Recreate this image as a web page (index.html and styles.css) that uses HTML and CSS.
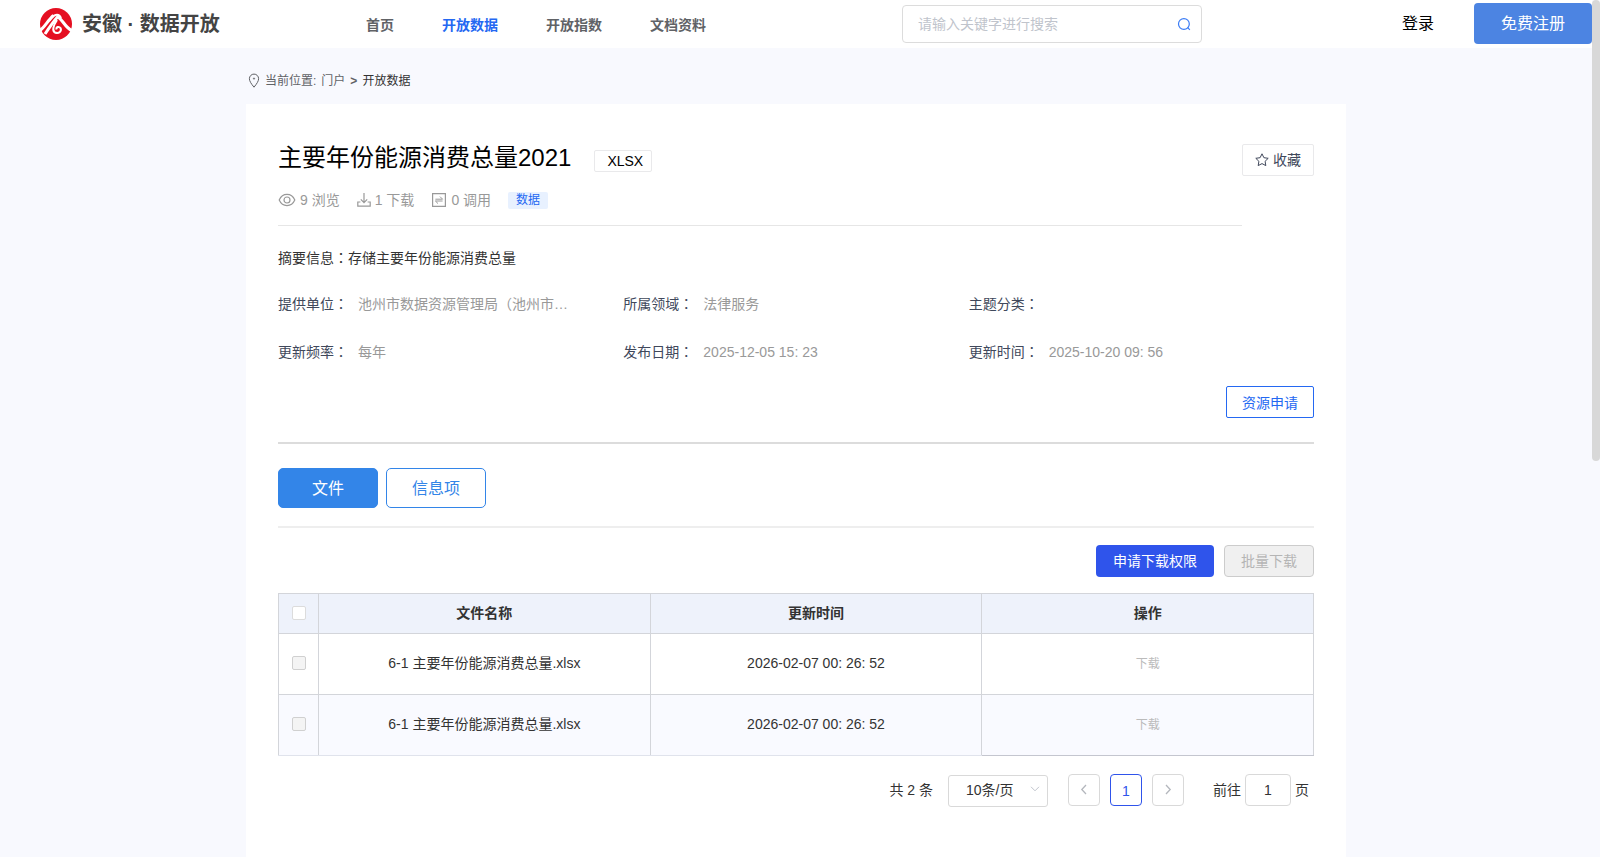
FILE: index.html
```html
<!DOCTYPE html>
<html lang="zh-CN">
<head>
  <meta charset="UTF-8">
  <meta name="viewport" content="width=device-width, initial-scale=1.0">
  <title>安徽 · 数据开放</title>
  <link rel="stylesheet" href="styles.css">
</head>
<body>
  <header class="header">
    <a class="logo" href="#">
      <svg width="32" height="32" viewBox="0 0 32 32">
        <circle cx="16" cy="16" r="16" fill="#e50f21"/>
        <path d="M0 22.5 C5 19 8 12 13.5 7.5 M5 26 C9 20 13 14 17.5 9 C22 10 25 20 32 22.5" fill="none" stroke="#fff" stroke-width="3"/>
        <path d="M9 13 C13 6 19 5 21 10" fill="none" stroke="#fff" stroke-width="2"/>
        <path d="M17 12 C13 18 12 23 15 24.5 C19 26 22 23 20.5 20 C19 18 16 19 16.5 21.5" fill="none" stroke="#fff" stroke-width="2"/>
      </svg>
      <span>安徽 · 数据开放</span>
    </a>
    <nav class="nav">
      <a href="#">首页</a>
      <a href="#" class="active">开放数据</a>
      <a href="#">开放指数</a>
      <a href="#">文档资料</a>
    </nav>
    <form class="search">
      <input type="text" placeholder="请输入关键字进行搜索" aria-label="搜索">
      <button type="button" aria-label="搜索">
        <svg width="14" height="14" viewBox="0 0 14 14" fill="none" stroke="#3b7cf5" stroke-width="1.2"><circle cx="6.9" cy="7" r="5.4"/><path d="M10.6 10.4 L12.8 12.8"/></svg>
      </button>
    </form>
    <a class="login" href="#">登录</a>
    <button class="register" type="button">免费注册</button>
  </header>

  <main class="container">
    <div class="breadcrumb">
      <svg width="12" height="16" viewBox="0 0 12 16" fill="none" stroke="#606266"><path d="M6 14.2 C3 10.5 1.4 8 1.4 5.7 A4.6 4.6 0 0 1 10.6 5.7 C10.6 8 9 10.5 6 14.2 Z"/><circle cx="6" cy="5.6" r=".6"/></svg>
      <span>当前位置:</span>
      <a href="#">门户</a>
      <b>&gt;</b>
      <span class="current">开放数据</span>
    </div>

    <section class="card">
      <div class="top">
        <div class="summary">
          <div class="title">
            <h1>主要年份能源消费总量2021</h1>
            <span class="format">XLSX</span>
          </div>
          <div class="stats">
            <span class="stat">
              <svg width="18" height="16" viewBox="0 0 18 16" fill="none" stroke="#999" stroke-width="1.2"><path d="M1.2 8 C4.5 .6 13.5 .6 16.8 8 C13.5 15.4 4.5 15.4 1.2 8 Z"/><circle cx="9" cy="8" r="3"/></svg>
              9 浏览
            </span>
            <span class="stat">
              <svg width="14" height="16" viewBox="0 0 14 16" fill="none" stroke="#999" stroke-width="1.2"><path d="M7 1 V10.5 M3.8 7.4 L7 10.6 L10.2 7.4 M3.4 10 H.8 V14.2 H13.2 V10 H10.6"/></svg>
              1 下载
            </span>
            <span class="stat">
              <svg width="16" height="16" viewBox="0 0 16 16" fill="none" stroke="#999" stroke-width="1.2"><path d="M1.6 1.6 H14.4 V14.4 H1.6 Z"/><path d="M4.4 7.2 H11.6 L9 4.6 M11.6 9 H4.4 L7 11.6" stroke-width="1"/></svg>
              0 调用
            </span>
            <span class="tag">数据</span>
          </div>
        </div>
        <button class="collect" type="button">
          <svg width="14" height="14" viewBox="0 0 14 14" fill="none" stroke="#40485b" stroke-linejoin="round"><path d="M7 .8 L8.9 4.7 L13.2 5.3 L10.1 8.3 L10.8 12.6 L7 10.6 L3.2 12.6 L3.9 8.3 L.8 5.3 L5.1 4.7 Z"/></svg>
          收藏
        </button>
      </div>

      <p class="abstract">摘要信息<span class="colon" lang="zh-TW">：</span>存储主要年份能源消费总量</p>

      <dl class="meta">
        <div><dt>提供单位<span class="colon" lang="zh-TW">：</span></dt><dd>池州市数据资源管理局（池州市…</dd></div>
        <div><dt>所属领域<span class="colon" lang="zh-TW">：</span></dt><dd>法律服务</dd></div>
        <div><dt>主题分类<span class="colon" lang="zh-TW">：</span></dt><dd></dd></div>
        <div><dt>更新频率<span class="colon" lang="zh-TW">：</span></dt><dd>每年</dd></div>
        <div><dt>发布日期<span class="colon" lang="zh-TW">：</span></dt><dd>2025-12-05 15: 23</dd></div>
        <div><dt>更新时间<span class="colon" lang="zh-TW">：</span></dt><dd>2025-10-20 09: 56</dd></div>
      </dl>

      <div class="apply">
        <button type="button">资源申请</button>
      </div>

      <div class="tabs">
        <button class="active" type="button">文件</button>
        <button type="button">信息项</button>
      </div>

      <div class="actions">
        <button class="primary" type="button">申请下载权限</button>
        <button type="button" disabled>批量下载</button>
      </div>

      <table class="files">
        <thead>
          <tr>
            <th class="check"><input type="checkbox" aria-label="全选"></th>
            <th>文件名称</th>
            <th>更新时间</th>
            <th>操作</th>
          </tr>
        </thead>
        <tbody>
          <tr>
            <td><input type="checkbox" aria-label="选择第1行" disabled></td>
            <td>6-1 主要年份能源消费总量.xlsx</td>
            <td>2026-02-07 00: 26: 52</td>
            <td><button type="button" disabled>下载</button></td>
          </tr>
          <tr>
            <td><input type="checkbox" aria-label="选择第2行" disabled></td>
            <td>6-1 主要年份能源消费总量.xlsx</td>
            <td>2026-02-07 00: 26: 52</td>
            <td><button type="button" disabled>下载</button></td>
          </tr>
        </tbody>
      </table>

      <div class="pagination">
        <span>共 2 条</span>
        <div class="size">
          <select aria-label="每页条数">
            <option>10条/页</option>
            <option>20条/页</option>
          </select>
          <svg width="10" height="6" viewBox="0 0 10 6" fill="none" stroke="#c0c4cc"><path d="M1 .8 L5 4.8 L9 .8"/></svg>
        </div>
        <div class="pager">
          <button type="button" aria-label="上一页" disabled><svg width="8" height="12" viewBox="0 0 8 12" fill="none" stroke="#b4b7bd" stroke-width="1.3"><path d="M6 1 L1.8 5.5 L6 10"/></svg></button>
          <button type="button" class="active">1</button>
          <button type="button" aria-label="下一页" disabled><svg width="8" height="12" viewBox="0 0 8 12" fill="none" stroke="#b4b7bd" stroke-width="1.3"><path d="M2 1 L6.2 5.5 L2 10"/></svg></button>
        </div>
        <label class="jump">前往 <input type="text" value="1"> 页</label>
      </div>
    </section>
  </main>
  <div class="scrollbar"></div>
</body>
</html>
```
FILE: styles.css
```css
*, *:before, *:after {
  box-sizing: border-box;
}
body {
  margin: 0;
  padding-right: 8px;
  background: #f8f9fe;
  color: #333;
  font: 14px/20px "Liberation Sans", "Noto Sans CJK SC", sans-serif;
}
a { color: inherit; text-decoration: none; }
button, input, select { font: inherit; color: inherit; margin: 0; }
button { padding: 0; border: 1px solid transparent; background: #fff; cursor: pointer; }
svg { flex: none; }
h1, p, dl, dd { margin: 0; }
/* full-width colon centred in its box */
.colon { font-family: "Noto Sans CJK TC", sans-serif; line-height: 1; }

/* header */
.header {
  display: flex;
  align-items: center;
  height: 48px;
  padding-left: 40px;
  background: #fff;
}
.logo { display: flex; align-items: center; gap: 10px; width: 326px; font-size: 20px; line-height: 32px; font-weight: bold; color: #444; }
.nav { display: flex; gap: 48px; padding-top: 2px; font-weight: bold; color: #606266; }
.nav .active { color: #2468f2; }
.search {
  display: flex;
  align-items: center;
  width: 300px;
  height: 38px;
  margin-left: 196px;
  padding: 0 10px 0 15px;
  border: 1px solid #dcdcdc;
  border-radius: 4px;
}
.search input { flex: 1; min-width: 0; padding: 0; border: 0; outline: none; background: none; }
.search input::placeholder { color: #c0c4cc; }
.search button { display: flex; border: 0; }
.login { margin-left: auto; font-size: 16px; color: #000; }
.register { width: 118px; height: 41px; margin: 0 0 1px 40px; border-radius: 4px; background: #4c84e2; color: #fff; font-size: 16px; }

/* content */
.container { max-width: 1100px; margin: 0 auto; }
.breadcrumb { display: flex; align-items: center; gap: 5px; height: 56px; padding: 10px 0 0 2px; font-size: 12px; color: #606266; }
.breadcrumb .current { color: #333; }
.card { min-height: 900px; padding: 40px 32px; background: #fff; }
.top { display: flex; align-items: flex-start; }
.summary { flex: 1; padding-bottom: 15px; border-bottom: 1px solid #e6e6e6; }
.title { display: flex; align-items: center; gap: 23px; height: 28px; color: #000; }
.title h1 { font-size: 24px; line-height: 28px; font-weight: normal; }
.format { height: 22px; margin-top: 6px; padding: 0 8px 0 12px; border: 1px solid #e9e9eb; border-radius: 2px; }
.stats { display: flex; align-items: center; gap: 17px; margin-top: 18px; color: #999; }
.stat { display: flex; align-items: center; gap: 4px; }
.tag { height: 17px; padding: 0 8px; border-radius: 2px; background: #e8f1ff; color: #2468f2; font-size: 12px; line-height: 16px; }
.collect { display: flex; align-items: center; justify-content: center; gap: 4px; width: 72px; height: 32px; border-color: #e9e9eb; border-radius: 2px; color: #40485b; }
.abstract { height: 20px; margin-top: 22px; }
.meta { display: grid; grid-template-columns: repeat(3, 1fr); gap: 28px 0; margin-top: 26px; }
.meta div { display: flex; gap: 10px; height: 20px; }
.meta dt { color: #40485b; }
.meta dd { color: #999; white-space: nowrap; }
.apply { display: flex; justify-content: flex-end; margin-top: 24px; padding-bottom: 24px; border-bottom: 2px solid #dcdcdc; }
.apply button { width: 88px; height: 32px; padding-top: 2px; border-color: #2468f2; border-radius: 2px; color: #2468f2; }
.tabs { display: flex; gap: 8px; padding: 24px 0 18px; border-bottom: 2px solid #eee; }
.tabs button { width: 100px; height: 40px; padding-top: 2px; border-color: #3385e8; border-radius: 5px; color: #3385e8; font-size: 16px; }
.tabs .active { background: #3385e8; color: #fff; }
.actions { display: flex; justify-content: flex-end; gap: 10px; margin: 17px 0 16px; }
.actions button { height: 32px; padding: 0 16px; border-radius: 4px; }
.actions .primary { background: #2f54eb; color: #fff; }
.actions button:disabled { border-color: #ccc; background: #f0f0f0; color: #b5b5b5; }

/* file table */
.files { width: 100%; border-collapse: collapse; table-layout: fixed; text-align: center; }
.files th, .files td { padding: 0 0 2px; border: 1px solid #d3d5da; }
.files th { height: 40px; background: #eef2fb; }
.files td { height: 61px; }
.files .check { width: 40px; }
.files tbody tr:nth-child(even) { background: #f9faff; }
.files tbody tr:last-child td { border-bottom-color: #e0e3ec; }
.files tbody tr:last-child td:last-child { border-bottom-color: #c4c6cf; }
.files input {
  appearance: none;
  display: block;
  width: 14px;
  height: 14px;
  margin: 0 auto;
  border: 1px solid #dcdcdc;
  border-radius: 2px;
  background: #fff;
}
.files input:disabled { border-color: #d0d0d0; background: #f4f4f4; }
.files button { padding-top: 2px; border: 0; background: none; color: #bbb; font-size: 12px; }

.pagination { display: flex; align-items: center; justify-content: flex-end; margin-top: 17px; padding-right: 5px; }
.size { position: relative; margin: 2px 20px 0 15px; }
.size select { appearance: none; display: block; width: 100px; height: 32px; padding: 0 17px 2px; border: 1px solid #d9d9d9; border-radius: 3px; background: #fff; }
.size svg { position: absolute; right: 8px; top: 11px; }
.pager { display: flex; gap: 10px; }
.pager button { display: flex; align-items: center; justify-content: center; width: 32px; height: 32px; border-color: #d9d9d9; border-radius: 4px; }
.pager .active { padding-top: 2px; border-color: #2f54eb; color: #2f54eb; }
.jump { display: flex; align-items: center; gap: 4px; margin-left: 29px; }
.jump input { width: 46px; height: 32px; padding: 0; border: 1px solid #d9d9d9; border-radius: 4px; text-align: center; }

.scrollbar { position: fixed; top: 0; right: 0; width: 8px; height: 461px; border-radius: 4px; background: #d8d8d8; }
```
